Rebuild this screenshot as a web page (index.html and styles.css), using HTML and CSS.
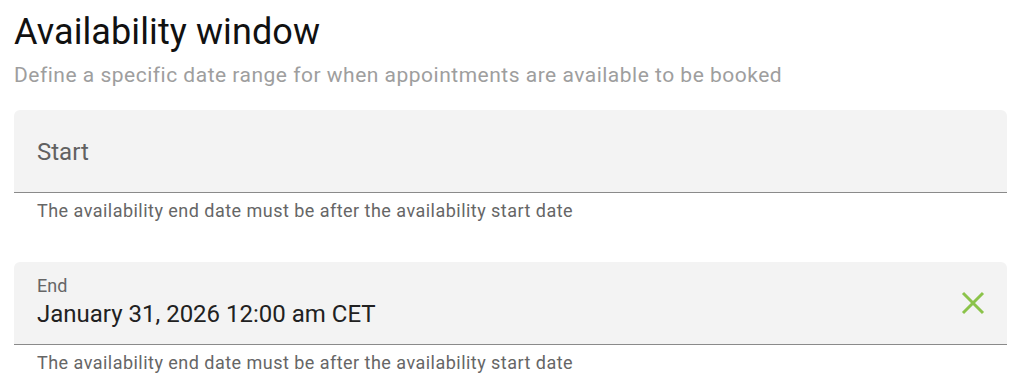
FILE: index.html
```html
<!DOCTYPE html>
<html>
<head>
<meta charset="utf-8">
<link rel="stylesheet" href="styles.css">
</head>
<body>
<div class="page">
  <h1 class="title">Availability window</h1>
  <p class="subtitle">Define a specific date range for when appointments are available to be booked</p>

  <div class="field">
    <div class="box box-empty">
      <span class="placeholder">Start</span>
    </div>
    <div class="helper">The availability end date must be after the availability start date</div>
  </div>

  <div class="field">
    <div class="box box-filled">
      <div class="content">
        <span class="label">End</span>
        <span class="value">January 31, 2026 12:00 am CET</span>
      </div>
      <svg class="clear" viewBox="0 0 24 24" width="24" height="24"><path d="M2 2 L22 22 M22 2 L2 22" stroke="#8bc34a" stroke-width="3" fill="none"/></svg>
    </div>
    <div class="helper">The availability end date must be after the availability start date</div>
  </div>
</div>
</body>
</html>
```
FILE: styles.css
```css
html, body { margin: 0; padding: 0; background: #fff; }
body { font-family: Roboto, "Noto Sans", sans-serif; }
.page { padding: 11px 17px 0 14px; }
.title { margin: 0; font-size: 36px; font-weight: 400; line-height: 42px; color: #111; letter-spacing: 0.1px; }
.subtitle { margin: 8px 0 0; font-size: 21px; line-height: 28px; color: #9e9e9e; letter-spacing: 0.5px; }
.field { margin-top: 21px; }
.field + .field { margin-top: 39px; }
.box { background: #f3f3f3; border-radius: 6px 6px 0 0; border-bottom: 1.5px solid #8a8a8a; height: 83px; box-sizing: border-box; display: flex; align-items: center; padding: 2px 22px 0 23px; }
.placeholder { font-size: 24px; color: #616161; }
.box-filled { justify-content: space-between; align-items: flex-start; padding-top: 12px; }
.content { display: flex; flex-direction: column; }
.label { font-size: 18px; line-height: 24px; color: #666; }
.value { font-size: 24px; line-height: 30px; color: #212121; margin-top: 1px; }
.clear { width: 24px; height: 24px; margin-top: 17px; }
.helper { font-size: 18px; line-height: 24px; color: #666; padding: 6px 23px 0; letter-spacing: 0.47px; }
```
